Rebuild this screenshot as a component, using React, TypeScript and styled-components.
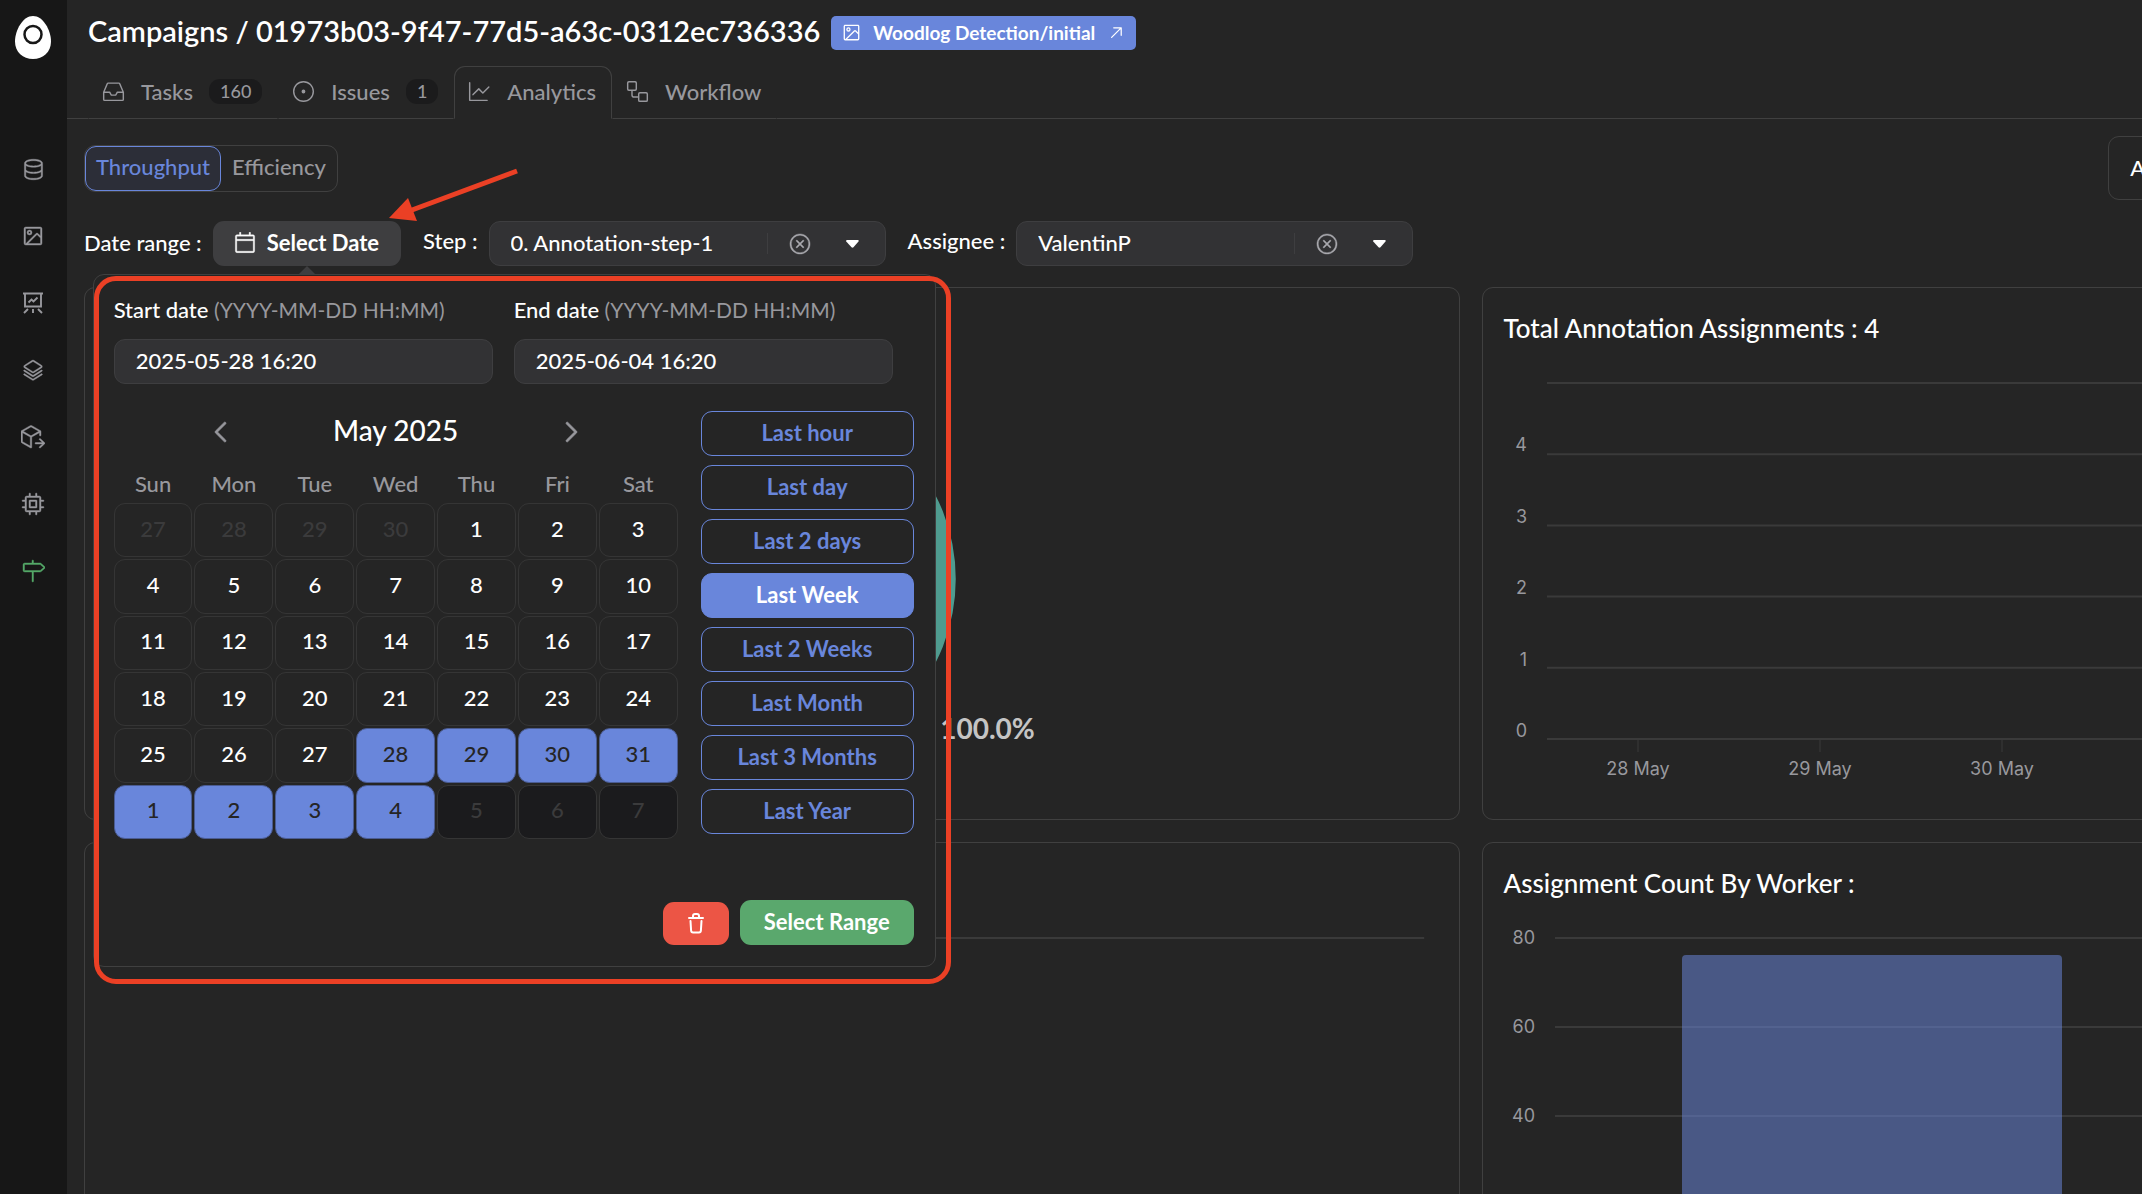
import React, { useState } from 'react';
import styled, { createGlobalStyle, css } from 'styled-components';
import {
  GoDatabase, GoImage, GoStack, GoPackageDependents, GoCpu, GoMilestone, GoInbox,
  GoIssueOpened, GoWorkflow, GoGraph, GoXCircle, GoCalendar, GoArrowUpRight,
  GoChevronLeft, GoChevronRight,
} from 'react-icons/go';

const color = {
  page: '#252525',
  rail: '#171717',
  field: '#323234',
  raised: '#3e3e40',
  line: '#404040',
  soft: '#353535',
  grid: '#3a3a3a',
  text: '#ffffff',
  muted: '#98989d',
  blue: '#6986db',
  red: '#ec5545',
  green: '#5aa86d',
  mark: '#eb4025',
};

const GlobalStyle = createGlobalStyle`
  *, *::before, *::after { box-sizing: border-box; }
  html, body, #root { height: 100%; }
  body {
    margin: 0;
    overflow: hidden;
    background: ${color.page};
    color: ${color.text};
    font: 500 22px/30px Lato, "Noto Sans", sans-serif;
  }
  button, input, select { font: inherit; color: inherit; }
  button { cursor: pointer; }
`;

const Page = styled.div`
  display: flex;
  height: 100%;
`;

const Rail = styled.nav`
  flex: none;
  width: 67px;
  background: ${color.rail};
  display: flex;
  flex-direction: column;
  align-items: center;
  padding: 16px 1px 0 0;
`;

const Logo = styled.svg`
  display: block;
  width: 36px;
  height: 43px;
`;

const RailList = styled.ul`
  list-style: none;
  margin: 88px 0 0;
  padding: 0;
  display: grid;
  gap: 23px;
`;

const RailLink = styled.a<{ $active?: boolean }>`
  display: grid;
  place-items: center;
  width: 44px;
  height: 44px;
  color: ${(p) => (p.$active ? '#54a868' : color.muted)};
  svg { stroke-width: 0.4; }
`;

const Main = styled.main`
  flex: 1;
  min-width: 0;
  overflow: hidden;
`;

const Header = styled.header`
  display: flex;
  align-items: center;
  gap: 11px;
  height: 66px;
  padding: 0 21px 1px;
`;

const Title = styled.h1`
  margin: 0;
  padding-bottom: 3px;
  font-size: 29px;
  line-height: 36px;
  font-weight: 600;
`;

const Dataset = styled.a`
  display: flex;
  align-items: center;
  gap: 11px;
  height: 34px;
  padding: 0 10px;
  border-radius: 5px;
  background: ${color.blue};
  color: ${color.text};
  font-size: 19px;
  font-weight: 700;
  text-decoration: none;
`;

const Tabs = styled.nav`
  display: flex;
  height: 53px;
  &::before, &::after { content: ''; border-bottom: 1px solid ${color.line}; }
  &::before { width: 21px; }
  &::after { flex: 1; }
`;

const Tab = styled.a<{ $active?: boolean }>`
  display: flex;
  align-items: center;
  gap: 16px;
  padding: 0 15px 2px 13px;
  color: ${color.muted};
  text-decoration: none;
  border: 1px solid transparent;
  border-bottom-color: ${color.line};
  ${(p) => p.$active && css`
    border-color: ${color.line};
    border-bottom-color: transparent;
    border-radius: 11px 11px 0 0;
  `}
`;

const Count = styled.span`
  padding: 0 11px;
  border-radius: 11px;
  background: #1b1b1c;
  font-size: 18px;
  line-height: 25px;
`;

const Content = styled.div`
  width: 136%;
  padding: 17px 0 0 17px;
  display: grid;
  gap: 21px;
`;

const TopRow = styled.div`
  display: flex;
  align-items: center;
  justify-content: space-between;
  padding-right: 32px;
`;

const Segments = styled.div`
  display: flex;
  border: 1px solid ${color.line};
  border-radius: 11px;
`;

const Segment = styled.button<{ $active?: boolean }>`
  height: 45px;
  padding: 0 10px 2px;
  border: 1px solid ${(p) => (p.$active ? color.blue : 'transparent')};
  border-radius: 11px;
  background: ${(p) => (p.$active ? '#2c2e38' : 'transparent')};
  color: ${(p) => (p.$active ? color.blue : color.muted)};
`;

const Summary = styled.section`
  width: 27%;
  padding: 16px 21px;
  border: 1px solid ${color.line};
  border-radius: 11px;
`;

const Filters = styled.div`
  display: flex;
  align-items: center;
  gap: 22px;
`;

const Filter = styled.div`
  display: flex;
  align-items: center;
  gap: 11px;
`;

const FilterLabel = styled.label`
  padding-bottom: 6px;
`;

const RangeLabel = styled.span`
  padding-bottom: 2px;
`;

const Anchor = styled.div`
  position: relative;
`;

const DateButton = styled.button`
  display: flex;
  align-items: center;
  gap: 11px;
  height: 45px;
  padding: 0 22px 1px 21px;
  border: 0;
  border-radius: 11px;
  background: ${color.raised};
  font-weight: 700;
`;

const SelectBox = styled.div`
  display: flex;
  align-items: center;
  width: 397px;
  height: 45px;
  border: 1px solid ${color.raised};
  border-radius: 11px;
  background: ${color.field};
`;

const Select = styled.select`
  flex: 1;
  min-width: 0;
  appearance: none;
  border: 0;
  padding: 0 21px 2px;
  background: transparent;
  outline: none;
`;

const Clear = styled.button`
  display: grid;
  place-items: center;
  width: 65px;
  height: 21px;
  padding: 0;
  border: 0;
  border-left: 1px solid ${color.raised};
  background: transparent;
  color: #a9a9ae;
  svg { stroke-width: 0.4; }
`;

const Caret = styled.svg`
  width: 13px;
  height: 8px;
  margin: 0 26px 0 14px;
`;

const Popover = styled.div`
  position: absolute;
  z-index: 2;
  top: 53px;
  left: -120px;
  width: 843px;
  padding: 20px 21px 21px 20px;
  border: 1px solid ${color.line};
  border-radius: 11px;
  background: ${color.page};
`;

const PopoverTip = styled.svg`
  position: absolute;
  top: -9px;
  left: 205px;
  width: 16px;
  height: 8px;
`;

const Fields = styled.div`
  display: grid;
  grid-template-columns: 379px 379px;
  gap: 21px;
`;

const Field = styled.label`
  display: grid;
  gap: 14px;
`;

const Hint = styled.span`
  color: ${color.muted};
  font-size: 21px;
  font-weight: 400;
`;

const Input = styled.input`
  width: 100%;
  height: 45px;
  padding: 0 21px 3px;
  border: 1px solid ${color.raised};
  border-radius: 11px;
  background: ${color.field};
  outline: none;
`;

const PickerBody = styled.div`
  display: grid;
  grid-template-columns: 564px 213px;
  justify-content: space-between;
  padding-top: 27px;
`;

const MonthRow = styled.div`
  display: flex;
  align-items: center;
  justify-content: space-between;
  height: 42px;
  padding: 0 90px;
`;

const Month = styled.h2`
  margin: 0;
  padding-bottom: 4px;
  font-size: 28px;
  line-height: 36px;
  font-weight: 500;
`;

const Arrow = styled.button`
  display: grid;
  place-items: center;
  padding: 0;
  border: 0;
  background: transparent;
  color: ${color.muted};
  svg { stroke-width: 0.5; }
`;

const Week = styled.div`
  display: grid;
  grid-template-columns: repeat(7, 1fr);
  gap: 2px;
  padding: 16px 0 4px;
  color: ${color.muted};
  text-align: center;
`;

const Days = styled.div`
  display: grid;
  grid-template-columns: repeat(7, 1fr);
  grid-auto-rows: 1fr;
  gap: 2px;
  height: 336px;
`;

type DayKind = 'out' | 'in' | 'picked' | 'future';

const Day = styled.button<{ $kind: DayKind }>`
  padding: 0 0 3px;
  border: 1px solid ${(p) => (p.$kind === 'picked' ? '#4b5c92' : color.soft)};
  border-radius: 11px;
  background: ${(p) => (p.$kind === 'picked' ? color.blue : p.$kind === 'future' ? '#1b1b1d' : 'transparent')};
  color: ${(p) => (p.$kind === 'in' ? color.text : p.$kind === 'picked' ? color.page : '#3b3b3c')};
`;

const Presets = styled.div`
  display: grid;
  gap: 9px;
  align-content: start;
`;

const Preset = styled.button<{ $active?: boolean }>`
  height: 45px;
  padding: 0 0 2px;
  border: 1px solid ${color.blue};
  border-radius: 11px;
  background: ${(p) => (p.$active ? color.blue : 'transparent')};
  color: ${(p) => (p.$active ? color.text : color.blue)};
  font-weight: 700;
`;

const Actions = styled.div`
  display: flex;
  justify-content: flex-end;
  align-items: flex-end;
  gap: 11px;
  padding-top: 61px;
`;

const Action = styled.button<{ $tone: string }>`
  display: grid;
  place-items: center;
  min-width: 66px;
  padding: 7px 24px 8px;
  border: 0;
  border-radius: 11px;
  background: ${(p) => p.$tone};
  font-weight: 700;
`;

const TrashIcon = styled.svg`
  display: block;
  width: 18px;
  height: 22px;
  margin: 3px 0;
`;

const Highlight = styled.div`
  position: absolute;
  inset: 1px -16px -18px 0;
  border: 5px solid ${color.mark};
  border-radius: 22px;
  pointer-events: none;
`;

const Pointer = styled.svg`
  position: absolute;
  z-index: 3;
  left: 175px;
  top: -54px;
  width: 132px;
  height: 56px;
  pointer-events: none;
`;

const Cards = styled.div`
  display: grid;
  grid-template-columns: 1fr 1fr;
  gap: 22px;
  padding-right: 32px;
`;

const Card = styled.section`
  height: 533px;
  padding: 21px 21px 0;
  border: 1px solid ${color.line};
  border-radius: 11px;
`;

const CardTitle = styled.h3`
  margin: 0 0 2px;
  font-size: 26px;
  line-height: 38px;
  font-weight: 500;
`;

const Chart = styled.svg`
  display: block;
  width: 100%;
  height: 440px;
  overflow: visible;
  font: 18px Inter, sans-serif;
`;

const AxisLabel = styled.text`
  fill: ${color.muted};
`;

const SliceLabel = styled.text`
  fill: #c4c4c4;
  font: 700 28px Lato, sans-serif;
`;

const RAIL_ITEMS = [
  { label: 'Datasets', icon: <GoDatabase size={23} stroke="currentColor" /> },
  { label: 'Images', icon: <GoImage size={24} stroke="currentColor" /> },
  {
    label: 'Experiments',
    icon: (
      <svg width="22" height="22" viewBox="0 0 22 22">
        <path
          d="M1 1.500h20M3 2v12.500h16V2M6.500 10.500l3-3 2 2 4-4M6 17l-4 4M11 17v4M16 17l4 4"
          fill="none"
          stroke="currentColor"
          style={{ strokeWidth: 1.9 }}
        />
      </svg>
    ),
  },
  { label: 'Models', icon: <GoStack size={22} stroke="currentColor" /> },
  { label: 'Deployments', icon: <GoPackageDependents size={24} stroke="currentColor" /> },
  { label: 'Jobs', icon: <GoCpu size={24} stroke="currentColor" /> },
  { label: 'Campaigns', icon: <GoMilestone size={24} stroke="currentColor" />, active: true },
];

const PRESETS = ['Last hour', 'Last day', 'Last 2 days', 'Last Week', 'Last 2 Weeks', 'Last Month', 'Last 3 Months', 'Last Year'];
const WEEKDAYS = ['Sun', 'Mon', 'Tue', 'Wed', 'Thu', 'Fri', 'Sat'];

const DAYS: { n: number; kind: DayKind }[] = [
  ...[27, 28, 29, 30].map((n) => ({ n, kind: 'out' as DayKind })),
  ...Array.from({ length: 31 }, (_, i) => ({ n: i + 1, kind: (i < 27 ? 'in' : 'picked') as DayKind })),
  ...[1, 2, 3, 4].map((n) => ({ n, kind: 'picked' as DayKind })),
  ...[5, 6, 7].map((n) => ({ n, kind: 'future' as DayKind })),
];

function ClearableSelect({ id, value }: { id: string; value: string }) {
  return (
    <SelectBox>
      <Select id={id} defaultValue={value}>
        <option>{value}</option>
      </Select>
      <Clear aria-label="Clear"><GoXCircle size={22} stroke="currentColor" /></Clear>
      <Caret viewBox="0 0 13 8"><path d="M0 1.200Q0 0 1.200 0H11.800Q13 0 12.700 1.200L7.500 7.300Q6.500 8.200 5.500 7.300Z" fill="#fff" /></Caret>
    </SelectBox>
  );
}

function DatePicker() {
  const [preset, setPreset] = useState('Last Week');
  return (
    <Popover role="dialog" aria-label="Date range">
      <PopoverTip viewBox="0 0 16 8"><path d="M8 0L16 8H0Z" fill={color.raised} /></PopoverTip>
      <Fields>
        <Field>
          <span>Start date <Hint>(YYYY-MM-DD HH:MM)</Hint></span>
          <Input defaultValue="2025-05-28 16:20" />
        </Field>
        <Field>
          <span>End date <Hint>(YYYY-MM-DD HH:MM)</Hint></span>
          <Input defaultValue="2025-06-04 16:20" />
        </Field>
      </Fields>
      <PickerBody>
        <div>
          <MonthRow>
            <Arrow aria-label="Previous month"><GoChevronLeft size={34} stroke="currentColor" /></Arrow>
            <Month>May 2025</Month>
            <Arrow aria-label="Next month"><GoChevronRight size={34} stroke="currentColor" /></Arrow>
          </MonthRow>
          <Week>{WEEKDAYS.map((d) => <span key={d}>{d}</span>)}</Week>
          <Days>{DAYS.map((d, i) => <Day key={i} $kind={d.kind}>{d.n}</Day>)}</Days>
        </div>
        <Presets>
          {PRESETS.map((p) => (
            <Preset key={p} $active={p === preset} onClick={() => setPreset(p)}>{p}</Preset>
          ))}
        </Presets>
      </PickerBody>
      <Actions>
        <Action $tone={color.red} aria-label="Delete">
          <TrashIcon viewBox="0 0 18 22" fill="none" stroke="#fff" strokeWidth="2" strokeLinecap="round" strokeLinejoin="round">
            <path d="M2 6h14M6 5.500V4a2 2 0 0 1 2-2h2a2 2 0 0 1 2 2v1.500M3.500 9l.6 9.500a2 2 0 0 0 2 1.900h5.800a2 2 0 0 0 2-1.900l.6-9.500" />
          </TrashIcon>
        </Action>
        <Action $tone={color.green}>Select Range</Action>
      </Actions>
      <Highlight />
    </Popover>
  );
}

function AssignmentsChart() {
  return (
    <Chart role="img" aria-label="Total annotation assignments">
      {[4, 3, 2, 1, 0].map((n, i) => (
        <AxisLabel key={n} x="23" y={102 + i * 71.500} textAnchor="end">{n}</AxisLabel>
      ))}
      {[0, 1, 2, 3, 4, 5].map((i) => (
        <line key={i} x1="43" x2="100%" y1={34 + i * 71.200} y2={34 + i * 71.200} stroke={color.grid} strokeWidth="2" />
      ))}
      {['28 May', '29 May', '30 May'].map((d, i) => (
        <g key={d}>
          <line x1={134 + i * 182} x2={134 + i * 182} y1="391" y2="403" stroke={color.grid} />
          <AxisLabel x={134 + i * 182} y="426" textAnchor="middle">{d}</AxisLabel>
        </g>
      ))}
    </Chart>
  );
}

function WorkerChart() {
  return (
    <Chart role="img" aria-label="Assignment count by worker">
      {[80, 60, 40].map((n, i) => (
        <g key={n}>
          <line x1="51" x2="100%" y1={34 + i * 89} y2={34 + i * 89} stroke={color.grid} strokeWidth="2" />
          <AxisLabel x="31" y={40 + i * 89} textAnchor="end">{n}</AxisLabel>
        </g>
      ))}
      <rect x="178" y="51" width="380" height="339" rx="4" fill={color.blue} fillOpacity="0.530" />
    </Chart>
  );
}

export default function App() {
  return (
    <Page>
      <GlobalStyle />
      <Rail aria-label="Main">
        <Logo viewBox="0 0 36 43">
          <path d="M18 0C28 0 36 14 36 25.500C36 36 28 43 18 43S0 36 0 25.500C0 14 8 0 18 0Z" fill="#fff" />
          <circle cx="18" cy="18.500" r="8.500" fill="#fff" stroke={color.rail} strokeWidth="2.500" />
        </Logo>
        <RailList>
          {RAIL_ITEMS.map((it) => (
            <li key={it.label}>
              <RailLink href="#" aria-label={it.label} $active={it.active}>{it.icon}</RailLink>
            </li>
          ))}
        </RailList>
      </Rail>
      <Main>
        <Header>
          <Title>Campaigns / 01973b03-9f47-77d5-a63c-0312ec736336</Title>
          <Dataset href="#"><GoImage size={21} />Woodlog Detection/initial<GoArrowUpRight size={20} /></Dataset>
        </Header>
        <Tabs>
          <Tab href="#"><GoInbox size={23} />Tasks<Count>160</Count></Tab>
          <Tab href="#"><GoIssueOpened size={23} />Issues<Count>1</Count></Tab>
          <Tab href="#" $active><GoGraph size={23} />Analytics</Tab>
          <Tab href="#"><GoWorkflow size={23} />Workflow</Tab>
        </Tabs>
        <Content>
          <TopRow>
            <Segments>
              <Segment $active>Throughput</Segment>
              <Segment>Efficiency</Segment>
            </Segments>
            <Summary>A</Summary>
          </TopRow>
          <Filters>
            <Filter>
              <RangeLabel>Date range :</RangeLabel>
              <Anchor>
                <DateButton><GoCalendar size={22} stroke="currentColor" strokeWidth="0.4" />Select Date</DateButton>
                <DatePicker />
                <Pointer viewBox="0 0 132 56">
                  <path d="M129 4L24 43" stroke={color.mark} strokeWidth="5" fill="none" />
                  <path d="M1 51L20 31L29 54Z" fill={color.mark} />
                </Pointer>
              </Anchor>
            </Filter>
            <Filter>
              <FilterLabel htmlFor="step">Step :</FilterLabel>
              <ClearableSelect id="step" value="0. Annotation-step-1" />
            </Filter>
            <Filter>
              <FilterLabel htmlFor="assignee">Assignee :</FilterLabel>
              <ClearableSelect id="assignee" value="ValentinP" />
            </Filter>
          </Filters>
          <Cards>
            <Card>
              <Chart role="img" aria-label="Share of assignments">
                <svg x="50%" overflow="visible">
                  <circle cx="0" cy="270" r="134" fill="none" stroke="#4f9b8f" strokeWidth="100" />
                  <SliceLabel x="263" y="430" textAnchor="end">100.0%</SliceLabel>
                </svg>
              </Chart>
            </Card>
            <Card>
              <CardTitle>Total Annotation Assignments : 4</CardTitle>
              <AssignmentsChart />
            </Card>
            <Card>
              <Chart role="img" aria-label="Assignments over time">
                <line x1="52" x2="99%" y1="74" y2="74" stroke={color.grid} strokeWidth="2" />
              </Chart>
            </Card>
            <Card>
              <CardTitle>Assignment Count By Worker :</CardTitle>
              <WorkerChart />
            </Card>
          </Cards>
        </Content>
      </Main>
    </Page>
  );
}
